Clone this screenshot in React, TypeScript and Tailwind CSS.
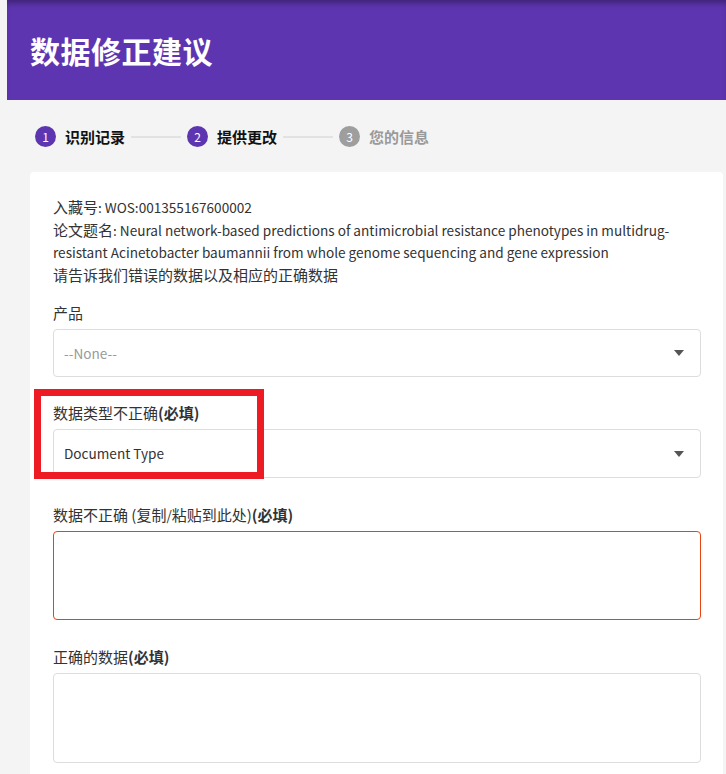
import React from "react";

function Caret() {
  return (
    <svg width="10" height="6" viewBox="0 0 10 6" className="shrink-0">
      <polygon points="0,0 10,0 5,6" fill="#555555" />
    </svg>
  );
}

function Step({ n, label, active }: { n: number; label: string; active: boolean }) {
  return (
    <div className="flex items-center">
      <div
        className={
          active
            ? "w-[21px] h-[21px] rounded-full bg-[#5e35b1] text-white text-[12px] leading-[21px] text-center"
            : "w-[21px] h-[21px] rounded-full bg-[#9e9e9e] text-white text-[12px] leading-[21px] text-center"
        }
      >
        {n}
      </div>
      <span
        className={
          active
            ? "ml-[9px] text-[15px] leading-[21px] font-bold text-[#111111]"
            : "ml-[9px] text-[15px] leading-[21px] font-bold text-[#9a9a9a]"
        }
      >
        {label}
      </span>
    </div>
  );
}

function Line() {
  return <div className="mx-[6px] w-[50px] h-[2px] bg-[#e2e2e2]" />;
}

function Label({ children, mt }: { children: React.ReactNode; mt: string }) {
  return (
    <div className={`${mt} text-[15px] leading-[22px] text-[#333333]`}>
      {children}
      <span className="font-bold">(必填)</span>
    </div>
  );
}

function L({ children }: { children: React.ReactNode }) {
  return <span className="text-[13.6px] leading-[22px]">{children}</span>;
}

export default function App() {
  return (
    <div className="relative min-h-screen bg-[#f4f4f4] font-['Noto_Sans_CJK_SC',sans-serif] overflow-hidden">
      <header className="ml-[7px] h-[100px] bg-[#5e35b1] pl-[23px] flex items-center shadow-[inset_0_6px_6px_-3px_rgba(0,0,0,0.35)]">
        <h1 className="text-white text-[30px] font-bold leading-none tracking-[0.5px]">数据修正建议</h1>
      </header>

      <div className="mt-[26px] pl-[35px] flex items-center h-[21px]">
        <Step n={1} label="识别记录" active />
        <Line />
        <Step n={2} label="提供更改" active />
        <Line />
        <Step n={3} label="您的信息" active={false} />
      </div>

      <div className="mt-[25px] ml-[30px] mr-[3px] bg-white rounded-[4px] pt-[24px] pl-[23px] pr-[22px] pb-[40px]">
        <div className="text-[15px] leading-[22.5px] text-[#333333]">
          <div>
            入藏号<L>: WOS:001355167600002</L>
          </div>
          <div>
            论文题名
            <L>
              : Neural network-based predictions of antimicrobial resistance phenotypes in multidrug-resistant
              Acinetobacter baumannii from whole genome sequencing and gene expression
            </L>
          </div>
          <div>请告诉我们错误的数据以及相应的正确数据</div>
        </div>

        <div className="mt-[16px] text-[15px] leading-[22px] text-[#333333]">产品</div>
        <div className="mt-[5px] h-[48px] border border-[#dddddd] rounded-[4px] flex items-center justify-between pl-[10px] pr-[16px]">
          <span className="text-[13.6px] text-[#9a9a9a]">--None--</span>
          <Caret />
        </div>

        <Label mt="mt-[25px]">数据类型不正确</Label>
        <div className="mt-[5px] h-[49px] border border-[#dddddd] rounded-[4px] flex items-center justify-between pl-[10px] pr-[16px]">
          <span className="text-[13.6px] text-[#333333]">Document Type</span>
          <Caret />
        </div>

        <Label mt="mt-[26px]">
          数据不正确 (复制<L>/</L>粘贴到此处)
        </Label>
        <div className="mt-[5px] h-[89px] border border-[#e8440f] rounded-[4px]" />

        <Label mt="mt-[26px]">正确的数据</Label>
        <div className="mt-[5px] h-[90px] border border-[#dddddd] rounded-[4px]" />
      </div>

      <div className="absolute left-[34px] top-[389px] w-[230px] h-[90px] border-[7px] border-[#ed1c24]" />
    </div>
  );
}
